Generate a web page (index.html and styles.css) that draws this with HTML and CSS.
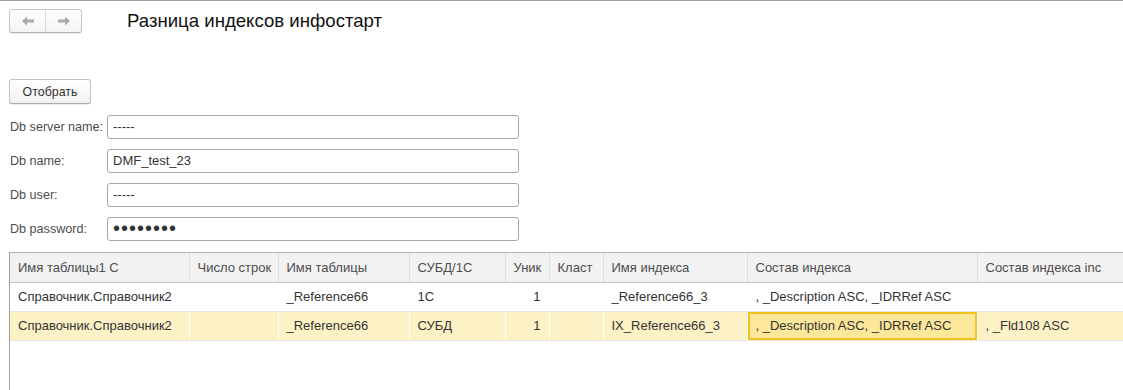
FILE: index.html
```html
<!DOCTYPE html>
<html lang="ru">
<head>
<meta charset="utf-8">
<title>Разница индексов инфостарт</title>
<link rel="stylesheet" href="styles.css">
</head>
<body>
<div class="topline"></div>
<div class="header">
  <div class="nav">
    <button class="nav-btn" aria-label="Назад">
      <svg width="14" height="10" viewBox="0 0 14 10"><path d="M1 5 L6 0.5 L6 3.5 L13 3.5 L13 6.5 L6 6.5 L6 9.5 Z" fill="#a9a9a9"/></svg>
    </button>
    <button class="nav-btn" aria-label="Вперёд">
      <svg width="14" height="10" viewBox="0 0 14 10"><path d="M13 5 L8 0.5 L8 3.5 L1 3.5 L1 6.5 L8 6.5 L8 9.5 Z" fill="#a9a9a9"/></svg>
    </button>
  </div>
  <h1 class="title">Разница индексов инфостарт</h1>
</div>
<div class="form">
  <button class="btn">Отобрать</button>
  <div class="fields">
    <div class="field"><label>Db server name:</label><div class="input">-----</div></div>
    <div class="field"><label>Db name:</label><div class="input">DMF_test_23</div></div>
    <div class="field"><label>Db user:</label><div class="input">-----</div></div>
    <div class="field"><label>Db password:</label><div class="input pass">••••••••</div></div>
  </div>
</div>
<div class="grid-wrap">
  <table class="grid">
    <colgroup>
      <col style="width:179px"><col style="width:89px"><col style="width:131px"><col style="width:96px"><col style="width:44px"><col style="width:54px"><col style="width:144px"><col style="width:230px"><col style="width:200px">
    </colgroup>
    <thead>
      <tr>
        <th>Имя таблицы1 С</th><th>Число строк</th><th>Имя таблицы</th><th>СУБД/1С</th><th>Уник</th><th>Класт</th><th>Имя индекса</th><th>Состав индекса</th><th>Состав индекса inc</th>
      </tr>
    </thead>
    <tbody>
      <tr>
        <td>Справочник.Справочник2</td><td></td><td>_Reference66</td><td>1С</td><td class="num">1</td><td></td><td>_Reference66_3</td><td>, _Description ASC, _IDRRef ASC</td><td></td>
      </tr>
      <tr class="sel">
        <td>Справочник.Справочник2</td><td></td><td>_Reference66</td><td>СУБД</td><td class="num">1</td><td></td><td>IX_Reference66_3</td><td class="cur">, _Description ASC, _IDRRef ASC</td><td>, _Fld108 ASC</td>
      </tr>
    </tbody>
  </table>
</div>
</body>
</html>
```

FILE: styles.css
```css
html, body {
  margin: 0;
  padding: 0;
  background: #fff;
  overflow: hidden;
}
body {
  height: 390px;
  display: flex;
  flex-direction: column;
  font-family: "Liberation Sans", Arial, sans-serif;
  color: #4d4d4d;
  font-size: 13px;
}
.topline {
  height: 1px;
  flex: none;
  background: #a0a0a0;
}
.header {
  display: flex;
  align-items: center;
  padding: 8px 0 0 9px;
}
.nav {
  display: flex;
  width: 73px;
  height: 24px;
  box-sizing: border-box;
  border: 1px solid #c6c6c6;
  border-bottom-color: #b0b0b0;
  border-radius: 3px;
  background: linear-gradient(#fff, #f4f4f4);
  box-shadow: 0 1px 1px rgba(0,0,0,0.08);
}
.nav-btn {
  flex: 1;
  border: 0;
  background: transparent;
  padding: 0;
  display: flex;
  align-items: center;
  justify-content: center;
}
.nav-btn + .nav-btn {
  border-left: 1px solid #dadada;
}
.title {
  margin: 0 0 0 45px;
  font-size: 18.6px;
  font-weight: normal;
  color: #111;
  line-height: 24px;
}
.form {
  padding: 46px 0 0 9px;
}
.btn {
  display: block;
  width: 82px;
  height: 25px;
  box-sizing: border-box;
  border: 1px solid #c3c3c3;
  border-bottom-color: #a8a8a8;
  border-radius: 3px;
  background: linear-gradient(#fff, #f1f1f1);
  box-shadow: 0 1px 1px rgba(0,0,0,0.08);
  font-family: inherit;
  font-size: 12.4px;
  color: #333;
  padding: 0;
}
.fields {
  margin-top: 11px;
  display: flex;
  flex-direction: column;
  gap: 10px;
}
.field {
  display: flex;
  align-items: center;
}
.field label {
  width: 98px;
  padding-left: 1px;
  box-sizing: border-box;
  font-size: 12.6px;
  color: #4d4d4d;
}
.input {
  width: 412px;
  height: 24px;
  box-sizing: border-box;
  border: 1px solid #a9a9a9;
  border-radius: 3px;
  padding: 0 5px;
  line-height: 22px;
  font-size: 13px;
  color: #333;
}
.input.pass {
  font-size: 20px;
  letter-spacing: 1px;
  line-height: 21px;
  color: #333;
}
.grid-wrap {
  flex: 1;
  min-height: 0;
  margin: 11px 0 0 9px;
  border-left: 1px solid #a0a0a0;
  border-top: 1px solid #b0b0b0;
  overflow: hidden;
}
.grid {
  table-layout: fixed;
  border-collapse: collapse;
  width: 1167px;
}
.grid th {
  height: 29px;
  box-sizing: border-box;
  background: #f2f2f2;
  font-weight: normal;
  text-align: left;
  padding: 0 8px;
  color: #4d4d4d;
  border-right: 1px solid #dedede;
  border-bottom: 1px solid #c6c6c6;
  white-space: nowrap;
  overflow: hidden;
}
.grid td {
  height: 29px;
  box-sizing: border-box;
  padding: 0 8px;
  color: #333;
  border-bottom: 1px solid #e6e6e6;
  border-right: 1px solid transparent;
  white-space: nowrap;
  overflow: hidden;
}
.grid td.num {
  text-align: right;
}
.grid tr.sel td {
  background: #fdf2c6;
  border-right-color: #fff;
}
.grid tr.sel td.cur {
  background: #fde79a;
  box-shadow: inset 0 0 0 2px #f5c21b;
}
```
